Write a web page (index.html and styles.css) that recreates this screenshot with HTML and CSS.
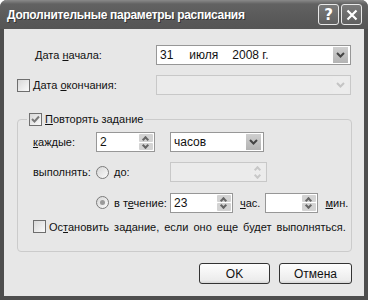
FILE: index.html
```html
<!DOCTYPE html>
<html>
<head>
  <meta charset="UTF-8">
  <title>Дополнительные параметры расписания</title>
  <link rel="stylesheet" href="styles.css">
</head>
<body>
  <div class="window">
    <div class="titlebar">
      <span class="title">Дополнительные параметры расписания</span>
      <div class="tbtns">
        <span class="tbtn help">?</span>
        <span class="tbtn">
          <svg width="12" height="12" viewBox="0 0 12 12"><path d="M1.5 1.5 L10.5 10.5 M10.5 1.5 L1.5 10.5" stroke="#fff" stroke-width="2.2"/></svg>
        </span>
      </div>
    </div>

    <div class="content">
      <div class="top">
        <label class="lbl-start">Дата <u>н</u>ачала:</label>
        <div class="select">
          <span class="val date"><span class="d">31</span><span class="m">июля</span><span>2008 г.</span></span>
          <span class="drop"><svg width="9" height="6" viewBox="0 0 9 6"><path d="M1 1 L4.5 4.5 L8 1" fill="none" stroke="#444" stroke-width="2"/></svg></span>
        </div>

        <label class="chk-line"><span class="chk"></span><span>Дата <u>о</u>кончания:</span></label>
        <div class="select disabled">
          <span class="val"></span>
          <span class="drop"><svg width="9" height="6" viewBox="0 0 9 6"><path d="M1 1 L4.5 4.5 L8 1" fill="none" stroke="#c4c4c4" stroke-width="2"/></svg></span>
        </div>
      </div>

      <fieldset class="group">
        <legend><span class="chk checked"><svg width="9" height="9" viewBox="0 0 9 9"><path d="M1 4 L3.5 6.5 L8 1.5" fill="none" stroke="#7a7a7a" stroke-width="2"/></svg></span><span><u>П</u>овторять задание</span></legend>

        <div class="grid">
          <span class="lbl"><u>к</u>аждые:</span>
          <div class="spin w59">
            <span class="v">2</span>
            <span class="arrows"><span class="ar up"></span><span class="ar dn"></span></span>
          </div>
          <div class="select w94">
            <span class="val">часов</span>
            <span class="drop"><svg width="9" height="6" viewBox="0 0 9 6"><path d="M1 1 L4.5 4.5 L8 1" fill="none" stroke="#444" stroke-width="2"/></svg></span>
          </div>

          <span class="lbl">выполнять:</span>
          <label class="radio-line"><span class="radio"></span><span><u>д</u>о:</span></label>
          <div class="spin w97 disabled">
            <span class="v"></span>
            <span class="arrows"><span class="ar up"></span><span class="ar dn"></span></span>
          </div>

          <span></span>
          <label class="radio-line"><span class="radio on"></span><span>в т<u>е</u>чение:</span></label>
          <div class="dur">
            <div class="spin w63">
              <span class="v">23</span>
              <span class="arrows"><span class="ar up"></span><span class="ar dn"></span></span>
            </div>
            <span class="unit"><u>ч</u>ас.</span>
            <div class="spin w53">
              <span class="v"></span>
              <span class="arrows"><span class="ar up"></span><span class="ar dn"></span></span>
            </div>
            <span class="unit"><u>м</u>ин.</span>
          </div>
        </div>

        <label class="chk-line stop"><span class="chk"></span><span>Ос<u>т</u>ановить задание, если оно еще будет выполняться.</span></label>
      </fieldset>

      <div class="buttons">
        <button class="btn ok">OK</button>
        <button class="btn">Отмена</button>
      </div>
    </div>
  </div>
</body>
</html>
```

FILE: styles.css
```css
body { margin: 0; font-family: "Liberation Sans", Arial, sans-serif; font-size: 11px; color: #111; }
u { text-decoration: underline; text-underline-offset: 1px; }

.window {
  width: 368px;
  height: 300px;
  box-sizing: border-box;
  background: #e7e7e7;
  border: 4px solid #4e4e4e;
  border-top: none;
  border-radius: 7px 7px 0 0;
  display: flex;
  flex-direction: column;
}

.titlebar {
  height: 29px;
  margin: 0 -4px;
  padding: 0 6px 0 7px;
  display: flex;
  align-items: center;
  justify-content: space-between;
  background: linear-gradient(#8a8a8a, #626262 4px, #5a5a5a 60%, #555);
  border-radius: 7px 7px 0 0;
}
.title {
  color: #fff;
  font-family: "Liberation Sans", Arial, sans-serif;
  font-weight: bold;
  font-size: 12px;
  letter-spacing: -0.3px;
  text-shadow: 1px 1px 0 #333;
}
.tbtns { display: flex; gap: 2px; }
.tbtn {
  width: 19px;
  height: 19px;
  border: 1px solid #e8e8e8;
  border-radius: 3px;
  background: linear-gradient(#7a7a7a, #606060);
  display: flex;
  align-items: center;
  justify-content: center;
  color: #fff;
  font-family: "DejaVu Sans", sans-serif;
  font-weight: bold;
  font-size: 15px;
}

.content { padding: 16px 12px 0 13px; min-width: 0; }

.top {
  display: grid;
  grid-template-columns: 139px 195px;
  row-gap: 10px;
  align-items: center;
}
.lbl-start { padding-left: 18px; }

.chk-line, .radio-line { display: flex; align-items: center; gap: 3px; }
.chk {
  width: 11px;
  height: 11px;
  flex: none;
  border: 1px solid #6e6e6e;
  background: linear-gradient(135deg, #d8d8d8, #fafafa);
  display: inline-flex;
  align-items: center;
  justify-content: center;
}
.chk.checked { border-color: #707070; margin-right: 3px; }

.select {
  height: 20px;
  box-sizing: border-box;
  border: 1px solid #979797;
  background: #fff;
  display: flex;
  align-items: center;
}
.select .val { flex: 1; padding-left: 3px; font-size: 12px; }
.select .drop {
  width: 15px;
  height: 16px;
  margin-right: 2px;
  background: linear-gradient(#cfcfcf, #b3b3b3);
  display: flex;
  align-items: center;
  justify-content: center;
}
.select.disabled { border-color: #c8c8c8; background: #ebebeb; }
.select.disabled .drop { background: #ececec; }
.date .d { margin-right: 16px; }
.date .m { margin-right: 14px; }

.group {
  margin: 17px 0 0;
  padding: 0 0 18px 15px;
  min-width: 0;
  border: 1px solid #cbcbcb;
  border-radius: 4px;
}
.group legend {
  display: flex;
  align-items: center;
  height: 14px;
  padding: 0 2px;
  margin-left: -6px;
}

.grid {
  display: grid;
  grid-template-columns: 63px 74px 1fr;
  grid-template-rows: 20px 20px 21px;
  row-gap: 10px;
  align-items: center;
  margin-top: 6px;
}
.radio {
  width: 11px;
  height: 11px;
  flex: none;
  border: 1px solid #7a7a7a;
  border-radius: 50%;
  background: linear-gradient(135deg, #d6d6d6, #fbfbfb);
  display: inline-flex;
  align-items: center;
  justify-content: center;
  margin-right: 2px;
}
.radio.on::after {
  content: "";
  width: 5px;
  height: 5px;
  border-radius: 50%;
  background: #9a9a9a;
}

.spin {
  height: 20px;
  box-sizing: border-box;
  border: 1px solid #979797;
  background: #fff;
  display: flex;
}
.spin .v { flex: 1; padding-left: 3px; line-height: 18px; font-size: 12px; }
.spin .arrows {
  width: 14px;
  padding: 1px 1px 1px 0;
  display: flex;
  flex-direction: column;
  gap: 1px;
}
.ar {
  flex: 1;
  background: #d3d3d3;
  border-radius: 1px;
  position: relative;
}
.ar::after {
  content: "";
  position: absolute;
  left: 4px;
  width: 3px;
  height: 3px;
  border-left: 2px solid #666;
  border-top: 2px solid #666;
}
.ar.up::after { top: 3px; transform: rotate(45deg); }
.ar.dn::after { top: 0; transform: rotate(225deg); }
.spin.disabled { border-color: #c8c8c8; background: #ebebeb; }
.spin.disabled .ar { background: #ececec; }
.spin.disabled .ar::after { border-color: #c8c8c8; }

.w59 { width: 59px; }
.w94 { width: 94px; }
.w97 { width: 97px; }
.w63 { width: 63px; }
.w53 { width: 53px; }

.dur { display: flex; align-items: center; }
.dur .unit { margin: 0 5px 0 7px; }

.stop { margin-top: 7px; gap: 3px; word-spacing: 2px; }

.buttons {
  display: flex;
  justify-content: flex-end;
  gap: 9px;
  margin-top: 11px;
}
.btn {
  height: 21px;
  width: 73px;
  border: 1px solid #333;
  border-radius: 3px;
  background: linear-gradient(#fefefe, #ececec 85%, #d6d6d6);
  font-family: "Liberation Sans", Arial, sans-serif;
  font-size: 12px;
  color: #111;
  padding: 0;
}
.btn.ok { width: 71px; }
```
